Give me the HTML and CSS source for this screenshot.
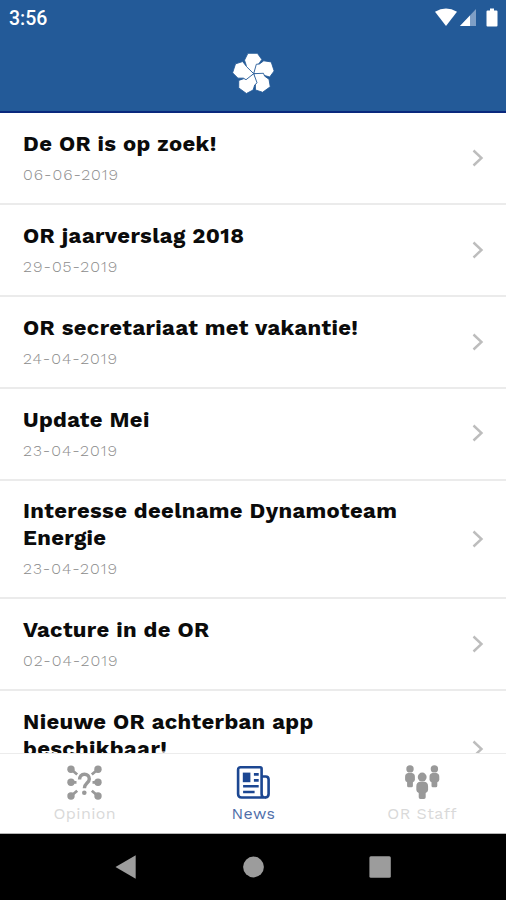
FILE: index.html
```html
<!DOCTYPE html>
<html lang="nl">
<head>
    <meta charset="UTF-8">
    <meta name="viewport" content="width=device-width, initial-scale=1.0">
    <title>News</title>
    <link rel="stylesheet" href="styles.css">
</head>
<body>
    <!-- Header -->
    <header>
        <div class="status-bar">
            <span class="time">3:56</span>
            <svg class="status-icons" width="66" height="20" viewBox="0 0 66 20">
                <path fill="#fff" d="M1 3.8Q12-2.8 23 3.8L12 18z"/>
                <path fill="#7f9fc6" d="M42 1v17H26z"/>
                <path fill="#fff" d="M36 7.4V18H26z"/>
                <path fill="#fff" d="M56 .5h4v2h2.5q1 0 1 1v14q0 1-1 1h-9q-1 0-1-1v-14q0-1 1-1H56z"/>
            </svg>
        </div>
        <div class="logo">
            <svg width="44" height="44" viewBox="-67 -67 130 130">
                <defs>
                    <path id="petal" d="M-17-60H11L24-42 13-26 0 0-24-16-22-25-27-40z"/>
                </defs>
                <g fill="#fff" stroke="#235a98" stroke-width="2.4">
                    <use href="#petal"/>
                    <use href="#petal" transform="rotate(72)"/>
                    <use href="#petal" transform="rotate(144)"/>
                    <use href="#petal" transform="rotate(216)"/>
                    <use href="#petal" transform="rotate(288)"/>
                </g>
            </svg>
        </div>
    </header>

    <!-- News list -->
    <main class="news-list">
        <a class="news-item">
            <div><h2>De OR is op zoek!</h2><p>06-06-2019</p></div>
            <svg class="chevron" viewBox="0 0 12 18"><path d="M1.5 1.5 9.5 9l-8 7.5"/></svg>
        </a>
        <a class="news-item">
            <div><h2>OR jaarverslag 2018</h2><p>29-05-2019</p></div>
            <svg class="chevron" viewBox="0 0 12 18"><path d="M1.5 1.5 9.5 9l-8 7.5"/></svg>
        </a>
        <a class="news-item">
            <div><h2>OR secretariaat met vakantie!</h2><p>24-04-2019</p></div>
            <svg class="chevron" viewBox="0 0 12 18"><path d="M1.5 1.5 9.5 9l-8 7.5"/></svg>
        </a>
        <a class="news-item">
            <div><h2>Update Mei</h2><p>23-04-2019</p></div>
            <svg class="chevron" viewBox="0 0 12 18"><path d="M1.5 1.5 9.5 9l-8 7.5"/></svg>
        </a>
        <a class="news-item">
            <div><h2>Interesse deelname Dynamoteam<br>Energie</h2><p>23-04-2019</p></div>
            <svg class="chevron" viewBox="0 0 12 18"><path d="M1.5 1.5 9.5 9l-8 7.5"/></svg>
        </a>
        <a class="news-item">
            <div><h2>Vacture in de OR</h2><p>02-04-2019</p></div>
            <svg class="chevron" viewBox="0 0 12 18"><path d="M1.5 1.5 9.5 9l-8 7.5"/></svg>
        </a>
        <a class="news-item">
            <div><h2>Nieuwe OR achterban app<br>beschikbaar!</h2><p>&nbsp;</p></div>
            <svg class="chevron" viewBox="0 0 12 18"><path d="M1.5 1.5 9.5 9l-8 7.5"/></svg>
        </a>
    </main>

    <!-- Tabs -->
    <nav class="tabs">
        <a class="tab">
            <svg width="36" height="36" viewBox="0 0 36 36">
                <g fill="#999">
                    <circle cx="5" cy="4.3" r="3.7"/><circle cx="5" cy="17.3" r="3.7"/><circle cx="5" cy="31" r="3.7"/>
                    <circle cx="32" cy="4.3" r="3.7"/><circle cx="32" cy="17.3" r="3.7"/><circle cx="32" cy="31" r="3.7"/>
                    <circle cx="18.3" cy="27.8" r="2.3"/>
                </g>
                <path fill="none" stroke="#999" stroke-width="2.8" d="M5 4.3l6.2 5.2M5 17.3h5.5M5 31l6.2-5.2M32 4.3l-6.2 5.2M32 17.3h-5.5M32 31l-6.2-5.2"/>
                <path fill="none" stroke="#999" stroke-width="3.4" d="M13.6 14.6c0-3.6 1.9-5.4 4.8-5.4s4.9 1.9 4.9 4.7c0 4.2-4.9 4.2-4.9 9.3"/>
            </svg>
            <span>Opinion</span>
        </a>
        <a class="tab active">
            <svg width="36" height="36" viewBox="-.6 0 36 36">
                <g fill="none" stroke="#1c4792" stroke-width="2.6" stroke-linejoin="round">
                    <path d="M5 2.3h19.5q1.5 0 1.5 1.5V29q0 3.5 3.3 3.5H6q-3.5 0-3.5-3.5V4.8q0-2.5 2.5-2.5z"/>
                    <path d="M26 11.5h4q3 0 3 3V29q0 3.5-3.6 3.5"/>
                    <path d="M18.3 9.4h4.8M18.3 15.4h4.8M7.5 21.3h15.6M7.5 27h11.5"/>
                </g>
                <path fill="#1c4792" d="M7.2 7.6h7.6v9.6H7.2z"/>
            </svg>
            <span>News</span>
        </a>
        <a class="tab">
            <svg width="36" height="36" viewBox="0 0 36 36">
                <defs>
                    <g id="person">
                        <circle cx="0" cy="3.7" r="3.7"/>
                        <path d="M-2 7.7h4Q4.9 8.2 4.9 11.5v3Q4.8 16.3 2.9 17v3.6q0 1.5-1.4 1.5h-3q-1.4 0-1.4-1.5V17q-1.9-.7-2-2.5v-3Q-4.9 8.2-2 7.7z"/>
                    </g>
                </defs>
                <g fill="#999">
                    <use href="#person" transform="translate(6 .2)"/>
                    <use href="#person" transform="translate(30.4 .2)"/>
                    <use href="#person" transform="translate(18.2 7.6) scale(1.2)"/>
                </g>
            </svg>
            <span>OR Staff</span>
        </a>
    </nav>

    <!-- Android navigation -->
    <footer>
        <svg width="24" height="24" viewBox="0 0 24 24"><path d="M1.5 12 21.7.3v23.4z"/></svg>
        <svg width="24" height="24" viewBox="0 0 24 24"><circle cx="12.5" cy="12" r="10.4"/></svg>
        <svg width="24" height="24" viewBox="0 0 24 24"><rect x="1.4" y="1.2" width="21.4" height="21.6" rx="1.5"/></svg>
    </footer>
</body>
</html>
```
FILE: styles.css
```css
* {
    margin: 0;
    padding: 0;
    box-sizing: border-box;
}
body {
    display: flex;
    flex-direction: column;
    height: 900px;
    overflow: hidden;
    background-color: #fff;
    font-family: "Work Sans", Inter, sans-serif;
}
/* Header */
header {
    flex: none;
    height: 113px;
    background-color: #235a98;
    border-bottom: 2px solid #0a287d;
}
.status-bar {
    display: flex;
    justify-content: space-between;
    height: 36px;
    padding: 8px 6px 0 9px;
}
.time {
    color: #fff;
    font: 500 19.5px/21px Roboto, sans-serif;
}
.logo {
    display: flex;
    justify-content: center;
    padding-top: 15px;
}
/* News list */
.news-list {
    flex: 1;
    min-height: 0;
    padding-top: 0.4px;
    overflow: hidden;
}
.news-item {
    display: flex;
    align-items: center;
    justify-content: space-between;
    padding: 16.8px 22px 17.2px 23px;
    border-bottom: 2px solid #ebebeb;
}
.news-item h2 {
    color: #0b0b0b;
    font-size: 22px;
    font-weight: 700;
    line-height: 27px;
    letter-spacing: 0.35px;
    white-space: nowrap;
}
.news-item p {
    padding-top: 8px;
    color: #8c8c8c;
    font-size: 16px;
    font-weight: 300;
    line-height: 20.8px;
    letter-spacing: 1px;
}
.chevron {
    flex: none;
    width: 12px;
    height: 18px;
    fill: none;
    stroke: #bdbdbd;
    stroke-width: 2.4;
}
/* Tabs */
.tabs {
    flex: none;
    display: flex;
    height: 81px;
    border-top: 1px solid #ececec;
    border-bottom: 1px solid #b5b5b5;
}
.tab {
    flex: 1;
    display: flex;
    flex-direction: column;
    align-items: center;
    padding-top: 11px;
    color: #d9d9d9;
    font-size: 16px;
    line-height: 20px;
    letter-spacing: 0.4px;
}
.tab span {
    padding: 3px 0 0 1px;
}
.tab.active {
    color: #4f6ea9;
}
/* Android navigation */
footer {
    flex: none;
    display: flex;
    align-items: center;
    justify-content: space-between;
    height: 66px;
    padding: 0 114px;
    background-color: #000;
    fill: #9c9c9c;
}
```
